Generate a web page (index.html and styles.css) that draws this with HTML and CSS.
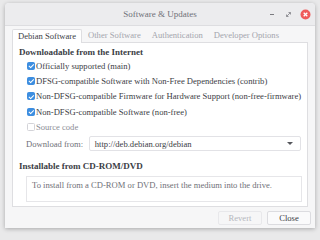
FILE: index.html
```html
<!DOCTYPE html>
<html>
<head>
<meta charset="utf-8">
<link rel="stylesheet" href="styles.css">
</head>
<body>
<div class="window">
  <div class="titlebar">
    <div class="title">Software &amp; Updates</div>
    <div class="controls">
      <span class="ctl min"></span>
      <span class="ctl max">
        <svg width="7" height="7" viewBox="0 0 7 7"><path d="M1.5 5.5 L5.5 1.5 M3.5 1.5 H5.5 V3.5 M1.5 3.5 V5.5 H3.5" stroke="#8a8a90" stroke-width="0.9" fill="none"/></svg>
      </span>
      <span class="ctl close">
        <svg width="11" height="11" viewBox="0 0 11 11"><circle cx="5.5" cy="5.5" r="5" fill="#ef5a5a"/><path d="M3.7 3.7 L7.3 7.3 M7.3 3.7 L3.7 7.3" stroke="#fff" stroke-width="1.3"/></svg>
      </span>
    </div>
  </div>
  <div class="body">
    <div class="tabs">
      <div class="tab active">Debian Software</div>
      <div class="tab">Other Software</div>
      <div class="tab">Authentication</div>
      <div class="tab">Developer Options</div>
    </div>
    <div class="panel">
      <div class="heading">Downloadable from the Internet</div>
      <div class="checks">
        <div class="row"><span class="cb on"></span>Officially supported (main)</div>
        <div class="row"><span class="cb on"></span>DFSG-compatible Software with Non-Free Dependencies (contrib)</div>
        <div class="row"><span class="cb on"></span>Non-DFSG-compatible Firmware for Hardware Support (non-free-firmware)</div>
        <div class="row"><span class="cb on"></span>Non-DFSG-compatible Software (non-free)</div>
        <div class="row dim"><span class="cb"></span>Source code</div>
      </div>
      <div class="dl">
        <span class="dl-label">Download from:</span>
        <div class="combo"><span>http://deb.debian.org/debian</span><span class="arrow"></span></div>
      </div>
      <div class="heading h2">Installable from CD-ROM/DVD</div>
      <div class="cdbox">To install from a CD-ROM or DVD, insert the medium into the drive.</div>
    </div>
    <div class="buttons">
      <div class="btn disabled">Revert</div>
      <div class="btn">Close</div>
    </div>
  </div>
</div>
</body>
</html>
```
FILE: styles.css
```css
html, body {
  margin: 0;
  padding: 0;
}
body {
  width: 320px;
  height: 234px;
  background: #e9e9ea;
  font-family: "Liberation Serif", "DejaVu Serif", serif;
  font-size: 8.6px;
  color: #3b3d45;
  overflow: hidden;
}
.window {
  margin: 3px 5px 0 5px;
  width: 310px;
  height: 225px;
  background: #f6f6f7;
  border-radius: 4px 4px 0 0;
  box-shadow: 0 1px 4px rgba(0,0,0,0.28);
  display: flex;
  flex-direction: column;
}
.titlebar {
  height: 22px;
  background: #ececee;
  border-bottom: 1px solid #dddde0;
  border-radius: 4px 4px 0 0;
  position: relative;
  display: flex;
  align-items: center;
  justify-content: center;
  flex-shrink: 0;
}
.title {
  font-size: 9px;
  color: #6f7078;
}
.controls {
  position: absolute;
  right: 4px;
  top: 6px;
  display: flex;
  align-items: center;
  gap: 6px;
}
.ctl {
  width: 11px;
  height: 11px;
  display: flex;
  align-items: center;
  justify-content: center;
}
.min::before {
  content: "";
  width: 4px;
  height: 1px;
  background: #7b7b80;
}
.body {
  padding: 2px 7px 0 7px;
  flex: 1;
  display: flex;
  flex-direction: column;
}
.tabs {
  display: flex;
  height: 14px;
  align-items: flex-end;
}
.tab {
  padding: 0 5px;
  height: 13px;
  line-height: 13px;
  color: #a4a5ad;
  margin-right: 1px;
}
.tab.active {
  background: #fff;
  color: #3b3d45;
  border: 1px solid #dedee1;
  border-bottom: none;
  border-radius: 2px 2px 0 0;
  height: 13px;
  position: relative;
  top: 1px;
  padding: 0 5px 0 5px;
}
.panel {
  background: #fff;
  border: 1px solid #dedee1;
  height: 165px;
  padding: 2px 6px 0 6px;
  box-sizing: border-box;
}
.heading {
  font-weight: bold;
  font-size: 9px;
  color: #3b3d45;
  height: 14px;
  line-height: 14px;
}
.checks {
  padding-left: 8px;
  margin-top: -1px;
}
.row {
  height: 15.3px;
  display: flex;
  align-items: center;
  white-space: nowrap;
}
.row.dim {
  color: #8c8d95;
}
.cb {
  width: 8px;
  height: 8px;
  border-radius: 1.5px;
  border: 1px solid #d3d3d8;
  background: #fff;
  box-sizing: border-box;
  margin-right: 1px;
  flex-shrink: 0;
  position: relative;
}
.cb.on {
  background: #3d8ee0;
  border-color: #3d8ee0;
}
.cb.on::after {
  content: "";
  position: absolute;
  left: 1.6px;
  top: 0.3px;
  width: 2px;
  height: 3.6px;
  border: solid #fff;
  border-width: 0 1.2px 1.2px 0;
  transform: rotate(45deg);
}
.dl {
  display: flex;
  align-items: center;
  margin-top: 2px;
  padding-left: 7px;
}
.dl-label {
  color: #6f7078;
  width: 63px;
}
.combo {
  width: 213px;
  height: 15px;
  border: 1px solid #e2e2e6;
  border-radius: 2px;
  box-sizing: border-box;
  display: flex;
  align-items: center;
  justify-content: space-between;
  padding: 0 7px 0 5px;
  color: #3b3d45;
}
.arrow {
  width: 0;
  height: 0;
  border-left: 3px solid transparent;
  border-right: 3px solid transparent;
  border-top: 3px solid #55565c;
}
.h2 {
  margin-top: 8px;
}
.cdbox {
  margin-left: 7px;
  margin-top: 3px;
  width: 276px;
  height: 26px;
  border: 1px solid #e6e6e9;
  box-sizing: border-box;
  padding: 3px 5px;
  color: #6f7078;
}
.buttons {
  display: flex;
  justify-content: flex-end;
  gap: 5px;
  margin-top: 4px;
  margin-right: -3px;
}
.btn {
  width: 44px;
  height: 14px;
  line-height: 13px;
  box-sizing: border-box;
  border: 1px solid #dcdce0;
  border-radius: 2px;
  background: #fafafb;
  text-align: center;
  color: #3b3d45;
}
.btn.disabled {
  color: #b5b6bd;
  border-color: #e8e8eb;
  background: #f6f6f7;
}
```
